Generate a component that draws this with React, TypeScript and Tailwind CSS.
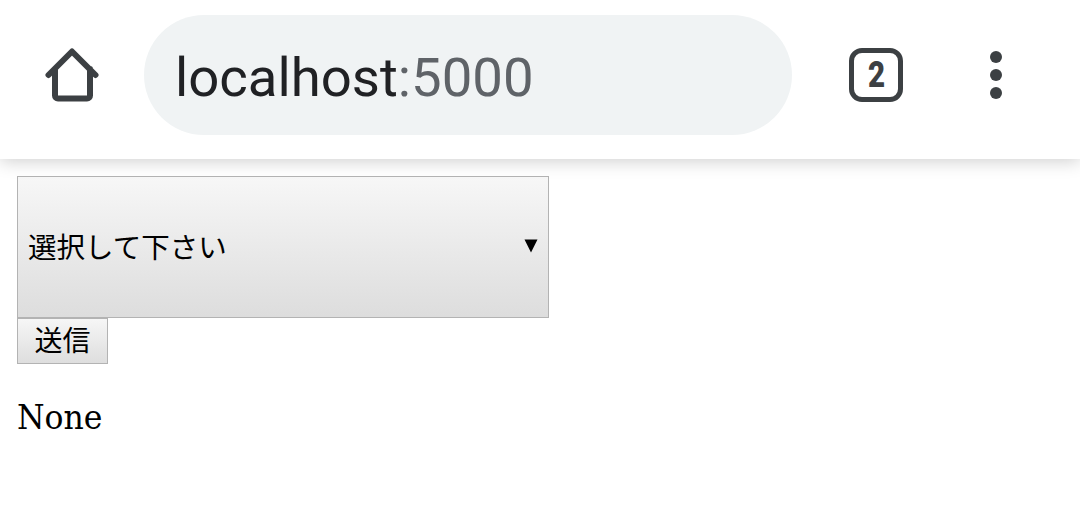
export default function App() {
  return (
    <div className="h-[530px] w-[1080px] overflow-hidden bg-white">
      <header className="relative z-10 flex h-[159px] items-start bg-white pl-[45px] shadow-[0_3px_16px_rgba(0,0,0,0.18)]">
        <svg className="mt-[47px] h-[56px] w-[54px] shrink-0" viewBox="0 0 54 56" fill="none">
          <path
            d="M3.5 28 27 4.5 50.5 28 M10 22V48.5C10 50.2 11.3 51.5 13 51.5H42C43.7 51.5 45 50.2 45 48.5V22"
            stroke="#3c4043"
            strokeWidth="6"
            strokeLinecap="round"
            strokeLinejoin="round"
          />
        </svg>
        <div className="mt-[15px] ml-[45px] flex h-[120px] w-[648px] items-center rounded-full bg-[#f0f3f4] pt-[6px] pl-[31px] font-['Roboto',sans-serif] text-[54.5px] text-[#202124]">
          localhost<span className="text-[#5f6368]">:5000</span>
        </div>
        <div className="mt-[48px] ml-[57px] flex h-[54px] w-[54px] items-center justify-center rounded-[13px] border-[5px] border-[#3c4043] font-['Roboto',sans-serif] text-[36px] font-black text-[#3c4043]">
          <span className="scale-x-[0.82]">2</span>
        </div>
        <div className="mt-[51px] ml-[87px] flex flex-col gap-[6px]">
          <span className="h-[12px] w-[12px] rounded-full bg-[#3c4043]" />
          <span className="h-[12px] w-[12px] rounded-full bg-[#3c4043]" />
          <span className="h-[12px] w-[12px] rounded-full bg-[#3c4043]" />
        </div>
      </header>

      <main className="pt-[17px] pl-[17px]">
        <div className="relative h-[142px] w-[532px]">
          <select className="h-full w-full appearance-none rounded-none border border-[#b3b3b3] bg-gradient-to-b from-[#f7f7f7] to-[#dddddd] pt-[2px] pl-[10px] font-['Liberation_Sans','Noto_Sans_CJK_JP',sans-serif] text-[28.5px] text-black">
            <option>選択して下さい</option>
          </select>
          <svg className="pointer-events-none absolute top-[63px] right-[11px] h-[14px] w-[14px]" viewBox="0 0 14 14">
            <path d="M0.5 0.5H13.5L7 13.5Z" fill="#000" />
          </svg>
        </div>
        <button className="flex h-[46px] w-[91px] items-center justify-center border border-[#b3b3b3] bg-gradient-to-b from-[#f6f6f6] to-[#dedede] pt-[2px] font-['Liberation_Sans','Noto_Sans_CJK_JP',sans-serif] text-[28px] text-black">
          送信
        </button>
        <p className="mt-[32px] origin-left scale-x-[0.955] font-['DejaVu_Serif',serif] text-[33px] leading-[44px] text-black">None</p>
      </main>
    </div>
  );
}
